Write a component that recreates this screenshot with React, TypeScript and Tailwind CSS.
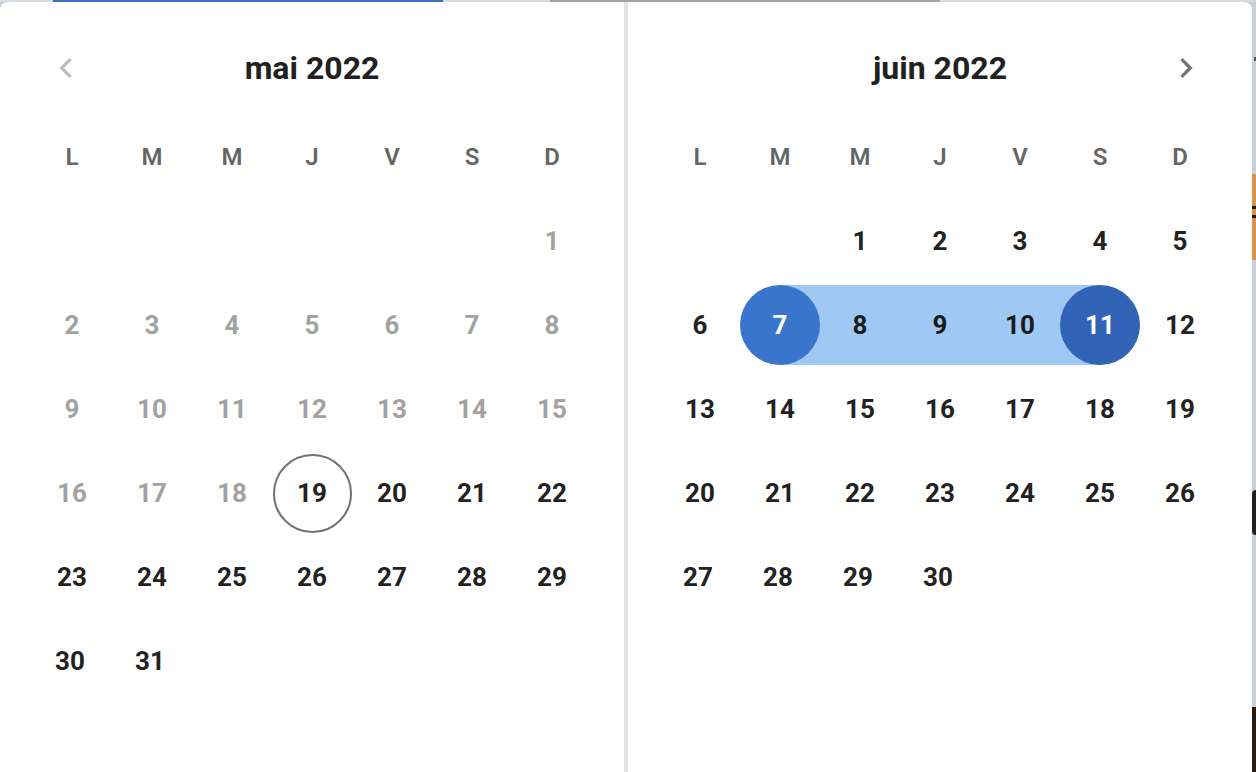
import React from "react";

type DayState = "disabled" | "normal" | "today" | "start" | "end" | "mid";

const WEEK = ["L", "M", "M", "J", "V", "S", "D"];

function ChevronLeft({ color }: { color: string }) {
  return (
    <svg width="40" height="40" viewBox="0 0 24 24" fill={color}>
      <path d="M15.41 7.41L14 6l-6 6 6 6 1.41-1.41L10.83 12z" />
    </svg>
  );
}

function ChevronRight({ color }: { color: string }) {
  return (
    <svg width="40" height="40" viewBox="0 0 24 24" fill={color}>
      <path d="M10 6L8.59 7.41 13.17 12l-4.58 4.59L10 18l6-6z" />
    </svg>
  );
}

function DayCell({ day, state, lastRow }: { day: number; state: DayState; lastRow: boolean }) {
  const shift = lastRow ? "pr-[4px]" : "";
  if (state === "start") {
    return (
      <div className="w-[80px] h-[80px] bg-[linear-gradient(to_right,transparent_50%,#9fc9f4_50%)]">
        <div className={`w-[80px] h-[80px] rounded-full bg-[#3a75cc] text-white flex items-center justify-center ${shift}`}>
          {day}
        </div>
      </div>
    );
  }
  if (state === "end") {
    return (
      <div className="w-[80px] h-[80px] bg-[linear-gradient(to_right,#9fc9f4_50%,transparent_50%)]">
        <div className={`w-[80px] h-[80px] rounded-full bg-[#3163b7] text-white flex items-center justify-center ${shift}`}>
          {day}
        </div>
      </div>
    );
  }
  if (state === "mid") {
    return (
      <div className={`w-[80px] h-[80px] bg-[#9fc9f4] text-[#1b1b1b] flex items-center justify-center ${shift}`}>
        {day}
      </div>
    );
  }
  if (state === "today") {
    return (
      <div className="w-[80px] h-[80px] flex items-center justify-center">
        <div className={`w-[79px] h-[79px] rounded-full border-[2px] border-[#747474] text-[#222222] flex items-center justify-center ${shift}`}>
          {day}
        </div>
      </div>
    );
  }
  return (
    <div
      className={`w-[80px] h-[80px] flex items-center justify-center ${shift} ${
        state === "disabled" ? "text-[#a2a2a2]" : "text-[#222222]"
      }`}
    >
      {day}
    </div>
  );
}

function MonthPanel({
  title,
  offset,
  days,
  stateOf,
  side,
}: {
  title: string;
  offset: number;
  days: number;
  stateOf: (d: number) => DayState;
  side: "left" | "right";
}) {
  const cells: React.ReactNode[] = [];
  const totalRows = Math.ceil((offset + days) / 7);
  for (let i = 0; i < offset; i++) cells.push(<div key={`e${i}`} className="w-[80px] h-[80px]" />);
  for (let d = 1; d <= days; d++) {
    const row = Math.floor((offset + d - 1) / 7);
    cells.push(<DayCell key={d} day={d} state={stateOf(d)} lastRow={row === totalRows - 1} />);
  }
  return (
    <div className="w-[624px] pl-[32px] pr-[32px] pt-[26px] flex flex-col">
      <div className="h-[80px] flex items-center">
        <div className="w-[68px] flex items-center justify-center">
          {side === "left" ? <ChevronLeft color="#bdbdbd" /> : null}
        </div>
        <div className="flex-1 text-center text-[32px] font-bold text-[#212121] leading-none">{title}</div>
        <div className="w-[68px] flex items-center justify-center">
          {side === "right" ? <ChevronRight color="#757575" /> : null}
        </div>
      </div>
      <div className="mt-[9px] grid grid-cols-[repeat(7,80px)] auto-rows-[80px] gap-y-[4px] text-[26px] font-bold leading-none">
        {WEEK.map((w, i) => (
          <div key={`w${i}`} className="flex items-center justify-center text-[24px] font-semibold text-[#666666]">
            {w}
          </div>
        ))}
        {cells}
      </div>
    </div>
  );
}

export default function App() {
  return (
    <div className="w-[1256px] h-[772px] overflow-hidden flex flex-col bg-[#c8d1d8] font-['Roboto','Liberation_Sans',sans-serif]">
      <div className="h-[2px] flex bg-[#d4dde3] shrink-0">
        <div className="ml-[53px] w-[390px] bg-[#3a6fc4]" />
        <div className="ml-[107px] w-[390px] bg-[#9ca6a9]" />
      </div>
      <div className="flex flex-1">
        <div className="w-[1252px] bg-white rounded-t-[8px] flex">
          <MonthPanel
            title="mai 2022"
            offset={6}
            days={31}
            side="left"
            stateOf={(d) => (d < 19 ? "disabled" : d === 19 ? "today" : "normal")}
          />
          <div className="w-[4px] bg-[#e0e0e0]" />
          <MonthPanel
            title="juin 2022"
            offset={2}
            days={30}
            side="right"
            stateOf={(d) => (d === 7 ? "start" : d === 11 ? "end" : d > 7 && d < 11 ? "mid" : "normal")}
          />
        </div>
        <div className="flex-1 flex flex-col">
          <div className="h-[55px]" />
          <div className="h-[4px] w-[2px] ml-[2px] bg-[#555]" />
          <div className="h-[113px]" />
          <div className="h-[86px] bg-[#d8934d] flex flex-col">
            <div className="h-[32px]" />
            <div className="h-[3px] bg-[#1a1a1a]" />
            <div className="h-[6px]" />
            <div className="h-[3px] bg-[#1a1a1a]" />
          </div>
          <div className="h-[230px]" />
          <div className="h-[45px] bg-[#222222] rounded-l-full" />
          <div className="h-[172px]" />
          <div className="flex-1 bg-[#2b1a0e]" />
        </div>
      </div>
    </div>
  );
}
